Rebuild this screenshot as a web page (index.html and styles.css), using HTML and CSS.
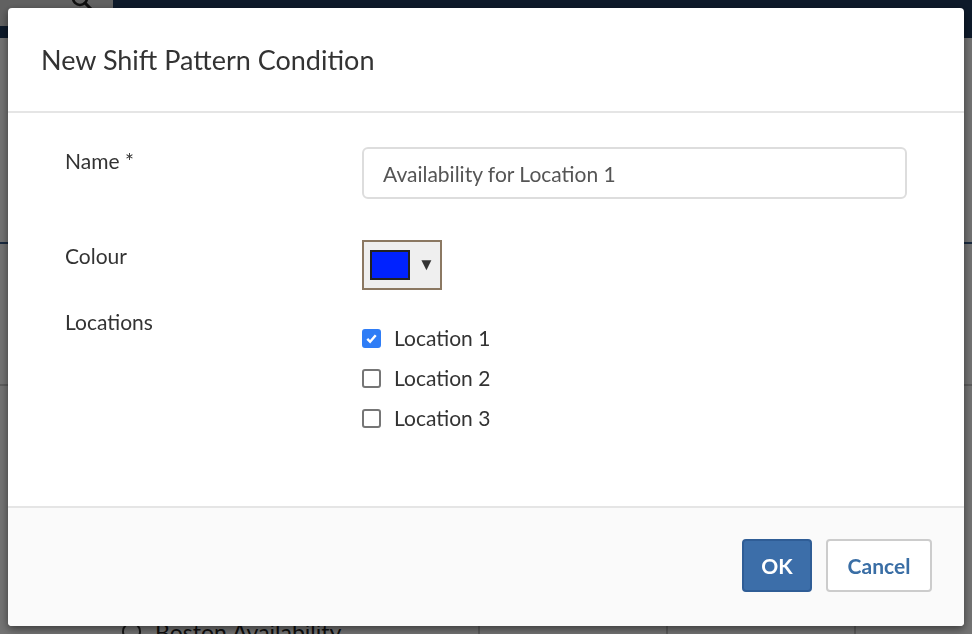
FILE: index.html
```html
<!DOCTYPE html>
<html lang="en">
  <head>
    <meta charset="UTF-8" />
    <meta name="viewport" content="width=device-width, initial-scale=1.0" />
    <title>New Shift Pattern Condition</title>
    <link rel="stylesheet" href="styles.css">
  </head>
  <body>
    <div class="page">
      <div class="navbar">
        <div class="search">
          <svg class="search-icon" width="24" height="24" viewBox="0 0 24 24">
            <circle cx="10" cy="8" r="7" fill="none" stroke="#222" stroke-width="2.6" />
            <line x1="15" y1="13" x2="21" y2="19" stroke="#222" stroke-width="3" stroke-linecap="round" />
          </svg>
        </div>
      </div>
      <div class="content">
        <div class="panel"></div>
        <div class="panel"></div>
        <div class="list-row">
          <div class="cell first"><span class="radio"></span>Boston Availability</div>
          <div class="cell"></div>
          <div class="cell"></div>
          <div class="cell last"></div>
        </div>
      </div>
    </div>

    <div class="overlay"></div>

    <div class="modal">
      <div class="modal-header">
        <h2>New Shift Pattern Condition</h2>
      </div>
      <div class="modal-body">
        <div class="form-row">
          <label class="form-label" for="name">Name *</label>
          <input class="text-input" id="name" type="text" value="Availability for Location 1" />
        </div>
        <div class="form-row colour-row">
          <label class="form-label">Colour</label>
          <div>
            <button class="colour-picker" type="button">
              <span class="swatch"></span>
              <span class="caret">&#9660;</span>
            </button>
          </div>
        </div>
        <div class="form-row locations-row">
          <label class="form-label">Locations</label>
          <div class="checklist">
            <label class="check-item">
              <input type="checkbox" checked />
              <span>Location 1</span>
            </label>
            <label class="check-item">
              <input type="checkbox" />
              <span>Location 2</span>
            </label>
            <label class="check-item">
              <input type="checkbox" />
              <span>Location 3</span>
            </label>
          </div>
        </div>
      </div>
      <div class="modal-footer">
        <button class="btn btn-primary" type="button">OK</button>
        <button class="btn btn-default" type="button">Cancel</button>
      </div>
    </div>
  </body>
</html>
```

FILE: styles.css
```css
body {
  margin: 0;
  padding: 0;
  font-family: Lato, "Open Sans", sans-serif;
  color: #333;
  height: 634px;
  overflow: hidden;
  background: #fff;
}
.navbar {
  height: 38px;
  background: #1f3a5e;
}
.search {
  width: 113px;
  height: 26px;
  background: #d8d8d8;
  position: relative;
  overflow: hidden;
}
.search-icon {
  position: absolute;
  left: 70px;
  top: -10px;
}
.content {
  padding-top: 204px;
}
.panel {
  height: 140px;
  border-top: 2px solid #ccc;
}
.panel:first-child {
  border-top-color: #3b5f8f;
}
.list-row {
  display: flex;
  height: 60px;
  margin-top: 88px;
  padding-left: 122px;
}
.cell {
  flex-shrink: 0;
  width: 186px;
  border-left: 2px solid #ccc;
}
.cell.first {
  width: 356px;
  border-left: none;
  font-size: 23px;
  padding-top: 4px;
  color: #222;
  white-space: nowrap;
}
.cell.last {
  flex: 1;
  width: auto;
}
.radio {
  display: inline-block;
  width: 15px;
  height: 15px;
  border: 2px solid #333;
  border-radius: 50%;
  margin-right: 14px;
}
.overlay {
  position: fixed;
  top: 0;
  left: 0;
  width: 100%;
  height: 100%;
  background: rgba(0, 0, 0, 0.55);
}
.modal {
  position: fixed;
  top: 8px;
  left: 8px;
  right: 8px;
  bottom: 8px;
  background: #fff;
  border-radius: 4px;
  box-shadow: 0 3px 9px rgba(0, 0, 0, 0.5);
  display: flex;
  flex-direction: column;
  overflow: hidden;
}
.modal-header {
  height: 105px;
  box-sizing: border-box;
  border-bottom: 2px solid #e5e5e5;
  padding: 0 33px;
  display: flex;
  align-items: center;
}
.modal-header h2 {
  margin: 0;
  font-size: 27px;
  font-weight: 400;
  color: #333;
}
.modal-body {
  flex: 1;
  padding: 34px 57px 0;
}
.form-row {
  display: grid;
  grid-template-columns: 297px 1fr;
  align-items: start;
}
.form-label {
  font-size: 21px;
  line-height: 28px;
  padding-top: 0;
}
.text-input {
  height: 52px;
  box-sizing: border-box;
  border: 2px solid #ddd;
  border-radius: 6px;
  padding: 0 19px;
  font-family: inherit;
  font-size: 21px;
  color: #555;
  outline: none;
}
.colour-row {
  margin-top: 41px;
}
.colour-row .form-label {
  padding-top: 2px;
}
.colour-picker {
  width: 80px;
  height: 50px;
  box-sizing: border-box;
  border: 2px solid #8b7862;
  background: #efefef;
  padding: 0 0 0 6px;
  display: flex;
  align-items: center;
  cursor: pointer;
}
.swatch {
  width: 40px;
  height: 30px;
  box-sizing: border-box;
  border: 2px solid #222;
  background: #0022ff;
}
.caret {
  font-size: 17px;
  color: #333;
  margin-left: 8px;
}
.locations-row {
  margin-top: 18px;
}
.checklist {
  padding-top: 9px;
}
.check-item {
  display: flex;
  align-items: center;
  height: 40px;
  font-size: 21px;
  color: #333;
}
.check-item input {
  appearance: none;
  width: 19px;
  height: 19px;
  margin: 2px 13px 0 0;
  box-sizing: border-box;
  border: 2px solid #767676;
  border-radius: 3px;
  background: #fff;
}
.check-item input:checked {
  border-color: #2f7df6;
  background: #2f7df6 url("data:image/svg+xml,%3Csvg xmlns='http://www.w3.org/2000/svg' viewBox='0 0 16 16'%3E%3Cpath d='M3.5 8.5l3 3 6-7' fill='none' stroke='white' stroke-width='2.6'/%3E%3C/svg%3E") center / 15px 15px no-repeat;
}
.modal-footer {
  height: 120px;
  box-sizing: border-box;
  border-top: 2px solid #e5e5e5;
  background: #fafafa;
  display: flex;
  justify-content: flex-end;
  align-items: center;
  gap: 14px;
  padding: 0 32px 4px;
}
.btn {
  height: 53px;
  box-sizing: border-box;
  border-radius: 4px;
  font-family: inherit;
  font-size: 21px;
  font-weight: 700;
  cursor: pointer;
}
.btn-primary {
  width: 70px;
  background: #3c6ea9;
  border: 2px solid #2f5d96;
  color: #fff;
}
.btn-default {
  width: 106px;
  background: #fff;
  border: 2px solid #ccc;
  color: #3a6ea5;
}
```
